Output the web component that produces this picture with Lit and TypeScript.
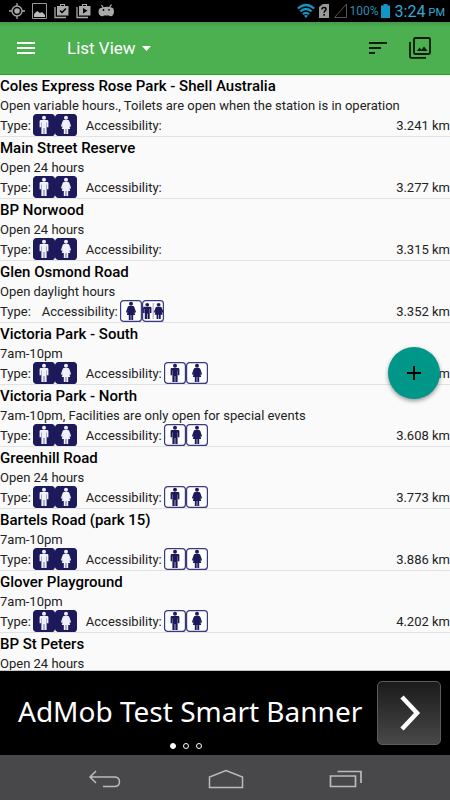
import { LitElement, html, css, svg } from "lit";
import { customElement, property } from "lit/decorators.js";

type Kind = "man" | "woman" | "both";

interface Place {
  name: string;
  hours: string;
  distance: string;
  types: Kind[];
  access: Kind[];
}

const PAIR: Kind[] = ["man", "woman"];

const PLACES: Place[] = [
  { name: "Coles Express Rose Park - Shell Australia", hours: "Open variable hours., Toilets are open when the station is in operation", distance: "3.241 km", types: PAIR, access: [] },
  { name: "Main Street Reserve", hours: "Open 24 hours", distance: "3.277 km", types: PAIR, access: [] },
  { name: "BP Norwood", hours: "Open 24 hours", distance: "3.315 km", types: PAIR, access: [] },
  { name: "Glen Osmond Road", hours: "Open daylight hours", distance: "3.352 km", types: [], access: ["woman", "both"] },
  { name: "Victoria Park - South", hours: "7am-10pm", distance: "3.593 km", types: PAIR, access: PAIR },
  { name: "Victoria Park - North", hours: "7am-10pm, Facilities are only open for special events", distance: "3.608 km", types: PAIR, access: PAIR },
  { name: "Greenhill Road", hours: "Open 24 hours", distance: "3.773 km", types: PAIR, access: PAIR },
  { name: "Bartels Road (park 15)", hours: "7am-10pm", distance: "3.886 km", types: PAIR, access: PAIR },
  { name: "Glover Playground", hours: "7am-10pm", distance: "4.202 km", types: PAIR, access: PAIR },
  { name: "BP St Peters", hours: "Open 24 hours", distance: "", types: [], access: [] },
];

const man = svg`<circle cx="11" cy="3.700" r="2"/><path d="M7.800 6h6.400q1.200 0 1.200 1.200v6h-1.500V8.500h-.3V20h-2.300v-6h-.6v6H8.400V8.500h-.3v4.700H6.600v-6Q6.600 6 7.800 6z"/>`;
const woman = svg`<circle cx="11" cy="3.700" r="2"/><path d="M9 6h4q1 0 1.300 1l1.800 5.200-1.400.6-1-3L15.200 15h-2v5h-1.900v-5h-.6v5H8.800v-5h-2l1.500-5.200-1 3-1.400-.6L7.700 7Q8 6 9 6z"/>`;

@customElement("toilet-sign")
class ToiletSign extends LitElement {
  @property() kind: Kind = "man";
  @property({ type: Boolean }) filled = false;

  static styles = css`
    :host { display: block; width: 22px; height: 22px; }
    svg { display: block; }
  `;

  render() {
    const navy = "#1d1a5c";
    const ink = this.filled ? "#f0f0fa" : navy;
    const figure =
      this.kind === "man" ? man
      : this.kind === "woman" ? woman
      : svg`<g transform="translate(-5.200 1.500) scale(.95 .88)">${man}</g><g transform="translate(6.200 1.500) scale(.95 .88)">${woman}</g><path d="M10.700 3h.8v16h-.8z" opacity=".5"/>`;
    return html`<svg width="22" height="22" viewBox="0 0 22 22" role="img" aria-label=${this.kind}>
      <rect x=".6" y=".6" width="20.800" height="20.800" rx="3" fill=${this.filled ? navy : "#fff"} stroke=${this.filled ? navy : "#3a3880"} stroke-width="1.200"/>
      <g fill=${ink}>${figure}</g>
    </svg>`;
  }
}

@customElement("place-row")
class PlaceRow extends LitElement {
  @property({ attribute: false }) place!: Place;

  static styles = css`
    :host { display: block; border-bottom: 1px solid #e2e2e2; color: #000; }
    .name { margin: 0; font-size: 15px; font-weight: 500; line-height: 22px; white-space: nowrap; }
    .hours { margin: 0; font-size: 13px; line-height: 17px; white-space: nowrap; color: #222; }
    .details { display: flex; align-items: center; height: 22px; font-size: 13px; color: #222; }
    .signs { display: flex; margin: 0 9px 0 2px; }
    .distance { margin-left: auto; }
  `;

  render() {
    const p = this.place;
    return html`
      <h2 class="name">${p.name}</h2>
      <p class="hours">${p.hours}</p>
      ${p.distance
        ? html`<div class="details">
            <span>Type:</span>
            <span class="signs">${p.types.map((k) => html`<toilet-sign .kind=${k} filled></toilet-sign>`)}</span>
            <span>Accessibility:</span>
            <span class="signs">${p.access.map((k) => html`<toilet-sign .kind=${k}></toilet-sign>`)}</span>
            <span class="distance">${p.distance}</span>
          </div>`
        : ""}
    `;
  }
}

@customElement("app-root")
class AppRoot extends LitElement {
  static styles = css`
    :host {
      display: flex; flex-direction: column; height: 100vh; overflow: hidden;
      font-family: Roboto, "Liberation Sans", sans-serif; background: #fafafa;
    }
    button { border: 0; padding: 0; margin: 0; background: none; font: inherit; color: inherit; display: flex; align-items: center; justify-content: center; }
    svg { display: block; flex: none; }

    .status { display: flex; align-items: center; justify-content: space-between; height: 22px; flex: none; background: #000; padding: 0 5px 0 9px; color: #35a9d8; }
    .notices { display: flex; align-items: center; gap: 7px; }
    .signals { display: flex; align-items: center; }
    .percent { font-size: 12px; margin: 0 1px 0 3px; color: #2b8cb3; }
    .clock { font-size: 16px; margin-left: 4px; }
    .meridiem { font-size: 11px; margin-left: 3px; padding-top: 3px; }

    .bar { display: flex; align-items: center; height: 53px; box-sizing: border-box; flex: none; padding: 0 19px 0 17px; background: linear-gradient(#44994a, #4caf50 5px); border-bottom: 1px solid #1fa32a; color: #fff; }
    .view { margin-left: 32px; gap: 6px; font-size: 17px; }
    .tools { margin-left: auto; display: flex; align-items: center; gap: 22px; color: #0b1a0c; }

    .content { position: relative; flex: 1; min-height: 0; border-bottom: 1px solid #c4c4c4; }
    .list { height: 100%; overflow: hidden; margin: 0; padding: 0; list-style: none; }
    .add { position: absolute; right: 10px; top: calc(50% - 26px); width: 52px; height: 52px; border-radius: 50%; background: #009688; color: #000; box-shadow: 0 2px 4px rgba(0, 0, 0, .4); }

    .ad { display: flex; align-items: center; box-sizing: border-box; height: 84px; flex: none; background: #000; color: #fff; padding: 0 9px 0 18px; position: relative; }
    .ad-text { flex: 1; font-family: "Noto Sans", "Open Sans", sans-serif; font-size: 28px; line-height: 40px; white-space: nowrap; color: #fff; text-decoration: none; padding-bottom: 4px; }
    .go { box-sizing: border-box; width: 64px; height: 64px; border: 1px solid #5c5c5c; border-radius: 5px; background: linear-gradient(#1b1b1b, #484848); }
    .dots { position: absolute; left: 0; right: 78px; bottom: 6px; display: flex; justify-content: center; gap: 7px; }
    .dot { box-sizing: border-box; width: 6px; height: 6px; border: 1px solid #fff; border-radius: 50%; }
    .on { background: #fff; }

    .nav { display: flex; align-items: center; justify-content: space-between; box-sizing: border-box; height: 45px; flex: none; background: #48484a; padding: 2px 87px 0 88px; }
  `;

  render() {
    return html`
      <div class="status">
        <div class="notices">
          <svg width="16" height="16" viewBox="0 0 16 16" fill="none" stroke="#aaa" stroke-width="1.300"><circle cx="8" cy="8" r="5"/><path d="M8 0v3M8 13v3M0 8h3M13 8h3"/><circle cx="8" cy="8" r="2.800" fill="#aaa" stroke="none"/></svg>
          <svg width="15" height="16" viewBox="0 0 15 16"><path d="M.5.5h14v15H.5z" fill="none" stroke="#999"/><path d="M2 14v-3l3-3 3 2 2-1 3 3v2z" fill="#bbb"/></svg>
          <svg width="15" height="16" viewBox="0 0 15 16"><path d="M1 4v10.500h11" fill="none" stroke="#aaa" stroke-width="1.300"/><path d="M3 3h3V1h5v2h3.500v9.500H3zM7 3h3V2H7z" fill="#aaa" fill-rule="evenodd"/><path d="M6 7.500l2 2 4-4" fill="none" stroke="#000" stroke-width="1.500"/></svg>
          <svg width="15" height="16" viewBox="0 0 15 16"><path d="M1 4v10.500h11" fill="none" stroke="#aaa" stroke-width="1.300"/><path d="M3 3h3V1h5v2h3.500v9.500H3zM7 3h3V2H7z" fill="#aaa" fill-rule="evenodd"/><path d="M7 5l4.500 2.700L7 10.500z" fill="#000"/></svg>
          <svg width="17" height="16" viewBox="0 0 17 16"><path d="M3.500 2l2 3M13.500 1.500l-2 3" stroke="#aaa" stroke-width="1.300"/><path d="M1.500 5.500Q8 2.500 15 5q2 3.500 0 7-1 1.500-3 1.300l-1-.8H6l-1 .8q-2 .2-3.500-1.300-2-3 0-6.500z" fill="#aaa"/><circle cx="5.500" cy="7" r=".9"/><circle cx="11" cy="6.800" r=".9"/></svg>
        </div>
        <div class="signals">
          <svg width="18" height="16" viewBox="0 0 18 16" fill="none" stroke="#1496c4" stroke-width="2.200"><path d="M.8 5.500Q9-1.500 17.200 5.500M3.400 8.400q5.600-4.800 11.200 0M5.900 11.200q3.100-2.600 6.200 0"/><path d="M9 15l-2-2.200q2-1.500 4 0z" fill="#1496c4" stroke="none"/></svg>
          <svg width="18" height="16" viewBox="0 0 18 16"><path d="M4 4l4-3h6v14H4z" fill="#999"/><path d="M7 6.500q0-2 2-2t2 1.700q0 1.200-1.200 1.800-.7.500-.7 1.700M9.100 11v1.700" fill="none" stroke="#000" stroke-width="1.500"/></svg>
          <svg width="14" height="16" viewBox="0 0 14 16" fill="none" stroke="#555"><path d="M1.500 14.500L13.500 1v13.500z"/></svg>
          <span class="percent">100%</span>
          <svg width="11" height="16" viewBox="0 0 11 16"><path d="M1 2.500h2.500V1h4v1.500H10V15H1z" fill="#1496c4"/></svg>
          <span class="clock">3:24</span><span class="meridiem">PM</span>
        </div>
      </div>

      <header class="bar">
        <button aria-label="Menu"><svg width="18" height="14" viewBox="0 0 18 14"><path d="M0 2h18M0 7h18M0 12h18" stroke="#fff" stroke-width="2"/></svg></button>
        <button class="view">List View<svg width="9" height="5" viewBox="0 0 9 5"><path d="M0 0h9L4.500 5z" fill="#fff"/></svg></button>
        <div class="tools">
          <button aria-label="Sort"><svg width="18" height="12" viewBox="0 0 18 12"><path d="M0 1h18M0 6h12M0 11h6" stroke="currentColor" stroke-width="1.800"/></svg></button>
          <button aria-label="Photos"><svg width="22" height="22" viewBox="0 0 22 22" fill="none" stroke="currentColor" stroke-width="1.800"><rect x="5" y="1" width="16" height="16" rx="1.200"/><path d="M1 5v14.500q0 1.300 1.300 1.300H17"/><path d="M8 14l2.500-3.500 2 2.300L15 9.500l3.500 4.500z" fill="currentColor" stroke="none"/></svg></button>
        </div>
      </header>

      <main class="content">
        <ul class="list">${PLACES.map((p) => html`<li><place-row .place=${p}></place-row></li>`)}</ul>
        <button class="add" aria-label="Add"><svg width="14" height="14" viewBox="0 0 14 14"><path d="M7 0v14M0 7h14" stroke="#000" stroke-width="2"/></svg></button>
      </main>

      <aside class="ad">
        <a class="ad-text" href="#">AdMob Test Smart Banner</a>
        <button class="go" aria-label="Open ad"><svg width="24" height="38" viewBox="0 0 24 38"><path d="M5 3l15 16L5 35" fill="none" stroke="#fff" stroke-width="4.500"/></svg></button>
        <div class="dots"><span class="dot on"></span><span class="dot"></span><span class="dot"></span></div>
      </aside>

      <nav class="nav">
        <button aria-label="Back"><svg width="34" height="18" viewBox="0 0 34 18" fill="none" stroke="#bbb" stroke-width="1.500"><path d="M8 1L2 7l6 6M2 7h24q5.500 0 5.500 4.800T26 16.500H15"/></svg></button>
        <button aria-label="Home"><svg width="36" height="20" viewBox="0 0 36 20" fill="none" stroke="#bbb" stroke-width="1.500"><path d="M1.500 18.500V8L18 1.500 34.500 8v10.500z"/></svg></button>
        <button aria-label="Recent apps"><svg width="34" height="18" viewBox="0 0 34 18" fill="none" stroke="#bbb" stroke-width="1.700"><path d="M1.500 6h25v10.500h-25zM8.500 1.500h23.500V13"/></svg></button>
      </nav>
    `;
  }
}
